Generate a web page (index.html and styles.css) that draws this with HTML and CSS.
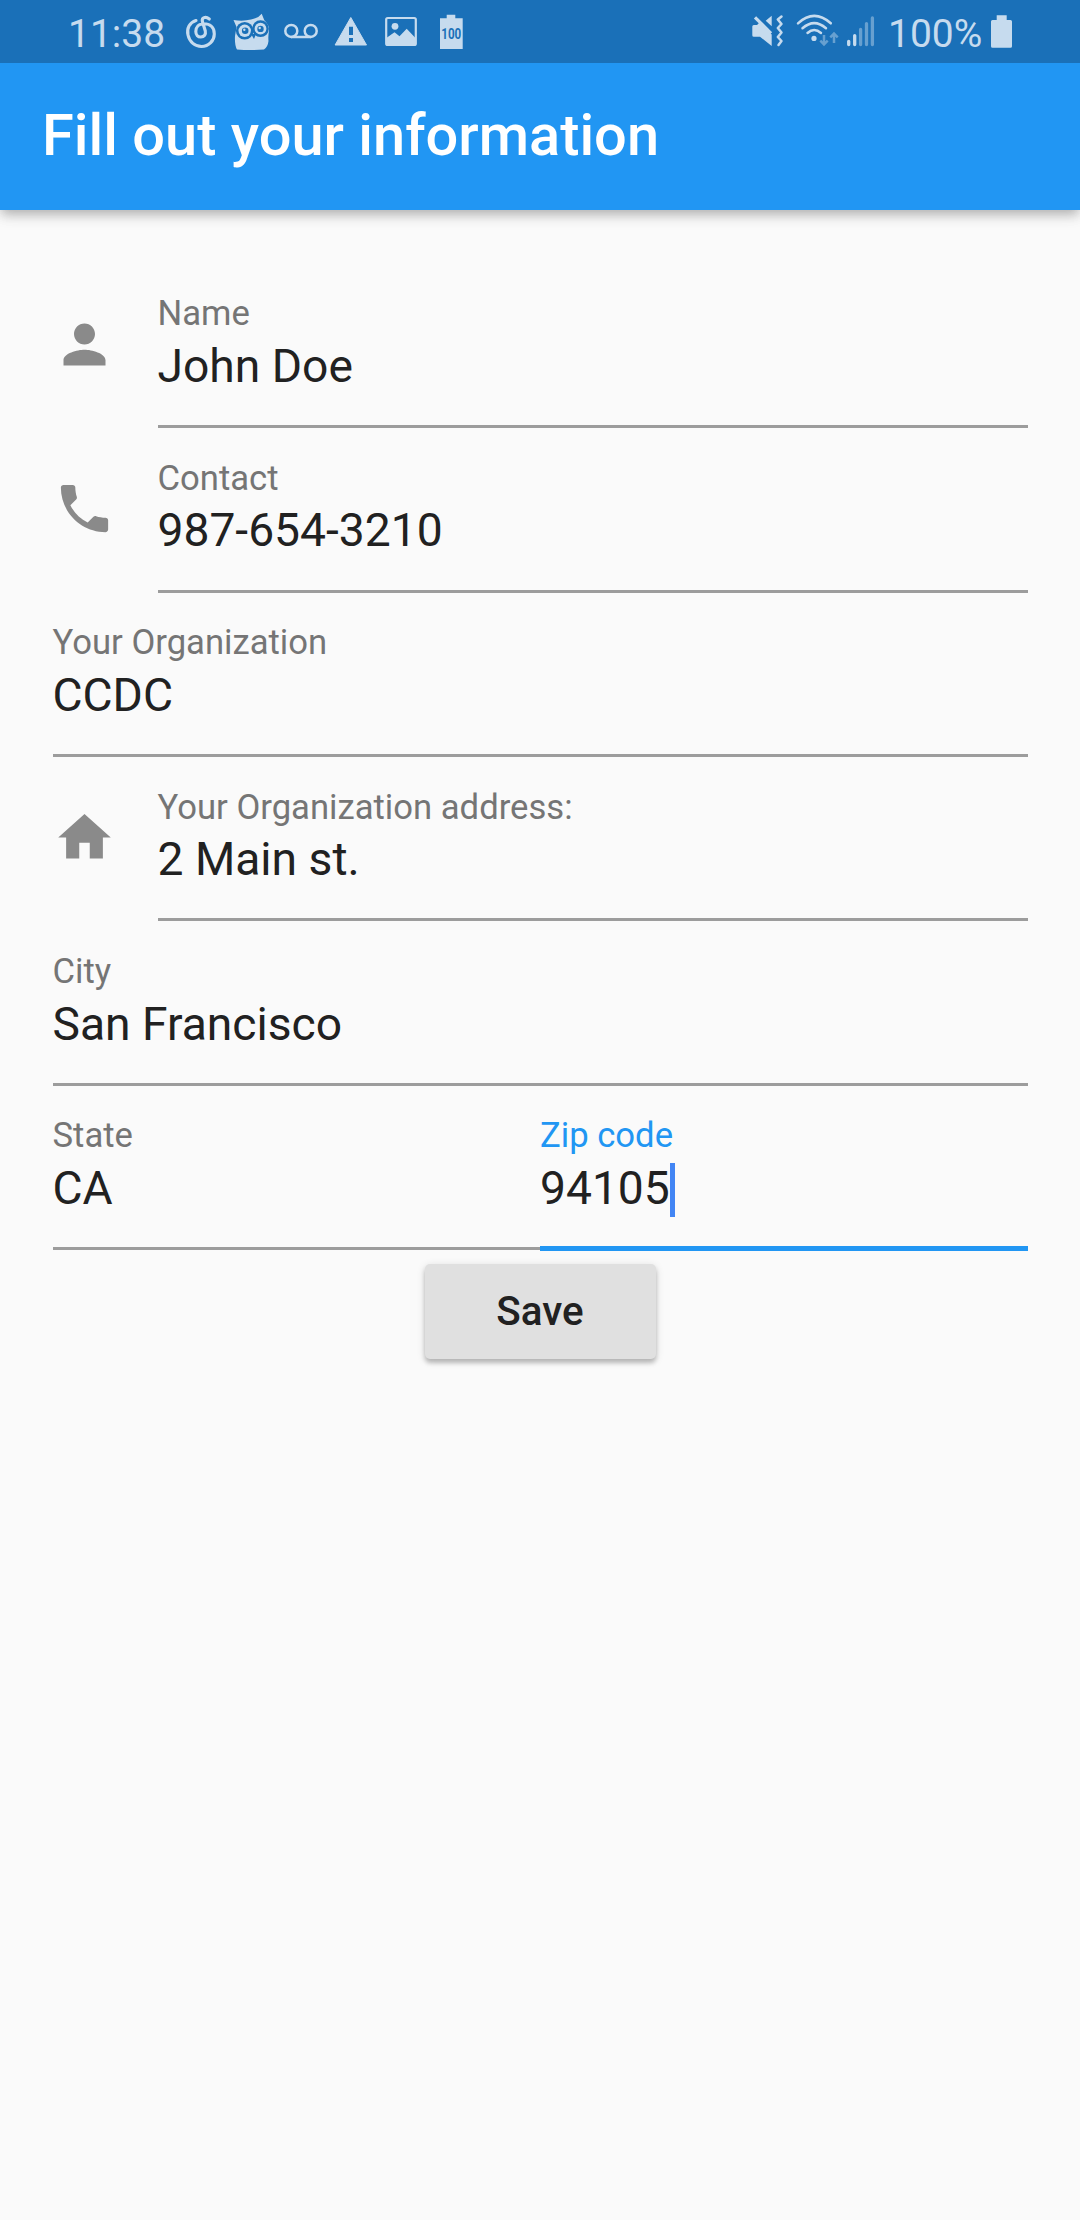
FILE: index.html
```html
<!DOCTYPE html>
<html lang="en">
<head>
<meta charset="utf-8">
<title>Fill out your information</title>
<link rel="stylesheet" href="styles.css">
</head>
<body>
<div class="status-bar">
  <span class="clock">11:38</span>
  <div class="notifications">
    <svg class="status-icon" viewBox="176 0 50 63"><path d="M196 20.500C189.500 22.500 186.500 28.500 188 35C189.500 42 195 46.500 201.500 46.500C209 46.500 214.300 40.500 214.300 34C214.300 27 209.500 23.800 204 23.800C198.500 23.800 195.800 27.500 195.800 31.500C195.800 35 198 37 200.800 37C204.300 37 206 34.300 205.300 31L202.400 21.500C201.500 17.500 205.500 16 209.300 19" fill="none" stroke="currentColor" stroke-width="3.100" stroke-linecap="round"/></svg>
    <svg class="status-icon" viewBox="226 0 50 63"><path d="M233.500 20Q243 21.500 251 19.500Q258 18.500 261.700 13.700L264.300 20.300Q269.500 25 269 31Q268 36 268.500 41Q267.800 47 264 49.500Q251 50.500 237 49.500Q234.500 45 235 36L236.500 27Z" fill="currentColor"/><g class="bar-fill"><circle cx="244.700" cy="30.800" r="8.800"/><circle cx="260.500" cy="28.700" r="8.400"/><path d="M251 34h5l-2 5z"/></g><g fill="currentColor"><circle cx="244.700" cy="30.800" r="6.200"/><circle cx="260.500" cy="28.700" r="5.900"/></g><g class="bar-fill"><circle cx="245.200" cy="30.800" r="3.300"/><circle cx="260.500" cy="28.900" r="3.200"/></g><g fill="currentColor"><circle cx="244.300" cy="29.800" r="1.200"/><circle cx="259.700" cy="28" r="1.200"/></g></svg>
    <svg class="status-icon" viewBox="276 0 50 63"><g fill="none" stroke="currentColor" stroke-width="2.500"><circle cx="291.300" cy="30.900" r="6"/><circle cx="310.700" cy="30.900" r="6"/><path d="M291 37h20"/></g></svg>
    <svg class="status-icon" viewBox="326 0 50 63"><path d="M350.800 17.500L366.500 45H335.100Z" fill="currentColor" stroke="currentColor" stroke-linejoin="round"/><path class="bar-fill" d="M349 26.700h4V35h-4zM349 38h4v4h-4z"/></svg>
    <svg class="status-icon" viewBox="376 0 50 63"><rect x="386.200" y="18" width="29.600" height="27" rx="1.500" fill="none" stroke="currentColor" stroke-width="2.200"/><circle cx="395" cy="26.300" r="3.400" fill="currentColor"/><path d="M387 37.500L394.500 32.300L399.500 36.300L406.700 28.800L415 37.500V44H387Z" fill="currentColor"/></svg>
    <svg class="status-icon" viewBox="426 0 50 63"><path d="M440 18.300h6.700V14.800h8.600v3.500h7.400V49H440Z" fill="currentColor"/><text class="battery-level" x="451.300" y="38.700" text-anchor="middle" textLength="20" lengthAdjust="spacingAndGlyphs">100</text></svg>
  </div>
  <div class="system">
    <svg class="system-icons" viewBox="750 0 128 63">
      <path d="M752.300 26.500q0-1.500 1.500-1.500h3.200l2.500-2.500 12.200 12V46L760 36.700h-6.200q-1.500 0-1.500-1.500zM765.700 20.700l6-5V26.300z" fill="currentColor"/>
      <g fill="none" stroke="currentColor" stroke-width="2.500" stroke-linecap="round">
        <path d="M755 17.300L771 33.300" stroke-width="3.200" stroke-linecap="butt"/>
        <path d="M781.500 16.500L777.800 19.500L781.500 24L777.800 28L781.500 32.500L777.800 37L781.500 41L778.500 45" stroke-linejoin="round"/>
        <path d="M798 23.300Q814.200 8.500 830.800 23.300M802.500 28.300Q814.200 18 826 28.300M807.500 33Q814.200 27 821 33"/>
      </g>
      <circle cx="814" cy="38.400" r="2.600" fill="currentColor"/>
      <g class="dim" fill="none" stroke="currentColor" stroke-width="2.500"><path d="M824 35v9.500M820.300 40.700l3.700 3.800 3.700-3.800M834 43v-9.500M830.300 37.300l3.700-3.800 3.700 3.800"/></g>
      <g stroke="currentColor" stroke-width="3.300" stroke-linecap="round"><path d="M848.700 41.300v3.300M854.700 35.600v9"/><path class="dim" d="M860.600 29.500v15.100M866.500 23.600v21M872.400 18v26.600"/></g>
    </svg>
    <span class="percent">100%</span>
    <svg class="battery" viewBox="991 0 21 63"><path d="M992.500 20h4.200v-4.700h10V20h3.800q1.500 0 1.500 1.500v24.700q0 1.500-1.500 1.500h-18q-1.500 0-1.500-1.500V21.500q0-1.500 1.500-1.500z" fill="currentColor"/></svg>
  </div>
</div>
<header class="app-bar"><h1 class="title">Fill out your information</h1></header>
<main class="form">
  <div class="row">
    <svg class="field-icon" viewBox="0 0 24 24"><path d="M12 12c2.210 0 4-1.790 4-4s-1.790-4-4-4-4 1.790-4 4 1.790 4 4 4zm0 2c-2.670 0-8 1.340-8 4v2h16v-2c0-2.660-5.330-4-8-4z"/></svg>
    <div class="field"><div class="label">Name</div><div class="value">John Doe</div></div>
  </div>
  <div class="row">
    <svg class="field-icon" viewBox="0 0 24 24"><path d="M6.620 10.790c1.440 2.830 3.760 5.140 6.590 6.590l2.200-2.200c.27-.27.67-.36 1.020-.24 1.120.37 2.330.57 3.570.57.55 0 1 .45 1 1V20c0 .55-.45 1-1 1-9.390 0-17-7.610-17-17 0-.55.45-1 1-1h3.500c.55 0 1 .45 1 1 0 1.250.2 2.450.57 3.570.11.35.03.74-.25 1.020l-2.200 2.200z"/></svg>
    <div class="field"><div class="label">Contact</div><div class="value">987-654-3210</div></div>
  </div>
  <div class="row">
    <div class="field"><div class="label">Your Organization</div><div class="value">CCDC</div></div>
  </div>
  <div class="row">
    <svg class="field-icon" viewBox="0 0 24 24"><path d="M10 20v-6h4v6h5v-8h3L12 3 2 12h3v8z"/></svg>
    <div class="field"><div class="label">Your Organization address:</div><div class="value">2 Main st.</div></div>
  </div>
  <div class="row">
    <div class="field"><div class="label">City</div><div class="value">San Francisco</div></div>
  </div>
  <div class="row">
    <div class="field"><div class="label">State</div><div class="value">CA</div></div>
    <div class="field focused"><div class="label">Zip code</div><div class="value">94105<span class="caret"></span></div></div>
  </div>
  <button class="save" type="button">Save</button>
</main>
</body>
</html>
```
FILE: styles.css
```css
* { box-sizing: border-box; }
body {
  margin: 0;
  min-height: 2220px;
  background: #fafafa;
  color: #212121;
  font-family: Roboto, sans-serif;
}
svg { display: block; flex: none; }
.status-bar {
  display: flex;
  height: 63px;
  padding: 0 68px;
  background: #1a70b8;
  color: #c6dbee;
  font-size: 39px;
  line-height: 68px;
}
.clock { width: 108px; }
.notifications, .system { display: flex; }
.system { margin-left: auto; }
.status-icon { width: 50px; height: 63px; }
.bar-fill { fill: #1a70b8; }
.battery-level { fill: #1a70b8; font-size: 14px; font-weight: 700; }
.system-icons { width: 128px; height: 63px; }
.dim { opacity: .45; }
.percent { width: 113px; padding-left: 10px; white-space: nowrap; }
.battery { width: 21px; height: 63px; }
.app-bar {
  display: flex;
  align-items: center;
  height: 147px;
  padding: 0 42px 4px;
  background: #2196f3;
  color: #fff;
  box-shadow: 0 5px 10px -2px rgba(0,0,0,.2), 0 8px 12px rgba(0,0,0,.08), 0 2px 18px rgba(0,0,0,.07);
}
.status-bar { position: relative; }
.title { margin: 0; font-size: 57.75px; font-weight: 500; line-height: 68px; }
.form {
  display: flex;
  flex-direction: column;
  padding: 53px 52.5px 0;
}
.row { display: flex; height: 164.4px; }
.field-icon {
  width: 63px;
  height: 63px;
  margin: 50px 42px 0 0;
  fill: #8a8a8a;
}
.field {
  flex: 1;
  display: flex;
  flex-direction: column;
  gap: 5.600px;
  height: 165.200px;
  padding-top: 30.400px;
  border-bottom: 3px solid #9c9c9c;
}
.label { color: #757575; font-size: 34.65px; line-height: 40px; }
.value { display: flex; font-size: 46.2px; line-height: 54px; }
.focused { height: 166px; border-bottom: 5px solid #2196f3; }
.focused .label { color: #2196f3; }
.caret { width: 5px; height: 54px; margin-top: 2px; background: #4285f4; }
.save {
  align-self: center;
  width: 231px;
  height: 94.5px;
  margin-top: 15px;
  padding: 0;
  border: 0;
  border-radius: 5px;
  background: #e0e0e0;
  color: #212121;
  font: 500 40.4px/48px Roboto, sans-serif;
  box-shadow: 0 4px 4px rgba(0,0,0,.2), 0 2px 8px rgba(0,0,0,.14);
}
```
